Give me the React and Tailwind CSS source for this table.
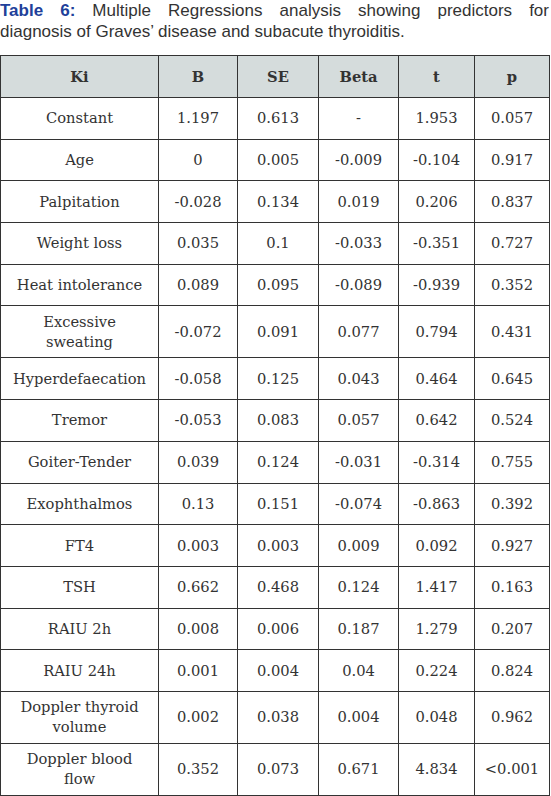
const rows = [
    ['Constant', '1.197', '0.613', '-', '1.953', '0.057'],
    ['Age', '0', '0.005', '-0.009', '-0.104', '0.917'],
    ['Palpitation', '-0.028', '0.134', '0.019', '0.206', '0.837'],
    ['Weight loss', '0.035', '0.1', '-0.033', '-0.351', '0.727'],
    ['Heat intolerance', '0.089', '0.095', '-0.089', '-0.939', '0.352'],
    ['Excessive sweating', '-0.072', '0.091', '0.077', '0.794', '0.431', true],
    ['Hyperdefaecation', '-0.058', '0.125', '0.043', '0.464', '0.645'],
    ['Tremor', '-0.053', '0.083', '0.057', '0.642', '0.524'],
    ['Goiter-Tender', '0.039', '0.124', '-0.031', '-0.314', '0.755'],
    ['Exophthalmos', '0.13', '0.151', '-0.074', '-0.863', '0.392'],
    ['FT4', '0.003', '0.003', '0.009', '0.092', '0.927'],
    ['TSH', '0.662', '0.468', '0.124', '1.417', '0.163'],
    ['RAIU 2h', '0.008', '0.006', '0.187', '1.279', '0.207'],
    ['RAIU 24h', '0.001', '0.004', '0.04', '0.224', '0.824'],
    ['Doppler thyroid volume', '0.002', '0.038', '0.004', '0.048', '0.962', true],
    ['Doppler blood flow', '0.352', '0.073', '0.671', '4.834', '<0.001', true],
];

const headers = ['Ki', 'B', 'SE', 'Beta', 't', 'p'];

export default function App() {
    return (
        <div className="w-[551px] bg-white">
            {/* Caption, first line spread edge to edge like the journal layout */}
            <div className="w-[549px] text-[17px] leading-[21px] text-[#333] [font-family:'Liberation_Sans',Arial,sans-serif]">
                <p className="text-justify [text-align-last:justify]">
                    <span className="font-bold text-[#21409a]">Table 6:</span> Multiple Regressions analysis showing predictors for
                </p>
                <p>diagnosis of Graves’ disease and subacute thyroiditis.</p>
            </div>

            <table className="mt-[13px] w-[549px] table-fixed border-collapse text-center text-[14.7px] leading-[20px] text-[#333] [font-family:'DejaVu_Serif',serif]">
                <colgroup>
                    <col className="w-[158px]" />
                    <col className="w-[79px]" />
                    <col className="w-[81px]" />
                    <col className="w-[80px]" />
                    <col className="w-[76px]" />
                    <col className="w-[75px]" />
                </colgroup>
                <thead>
                    <tr className="h-[42px] bg-[#d5dcdc]">
                        {headers.map(h => (
                            <th key={h} className="border border-[#333] font-bold">{h}</th>
                        ))}
                    </tr>
                </thead>
                <tbody>
                    {rows.map(r => (
                        <tr key={r[0]} className={r[6] ? 'h-[52px]' : 'h-[41.7px]'}>
                            {r.slice(0, 6).map((c, i) => (
                                <td key={i} className={`border border-[#333] py-[5px] ${i === 0 ? 'px-[10px]' : 'px-1'}`}>{c}</td>
                            ))}
                        </tr>
                    ))}
                </tbody>
            </table>
        </div>
    );
}
